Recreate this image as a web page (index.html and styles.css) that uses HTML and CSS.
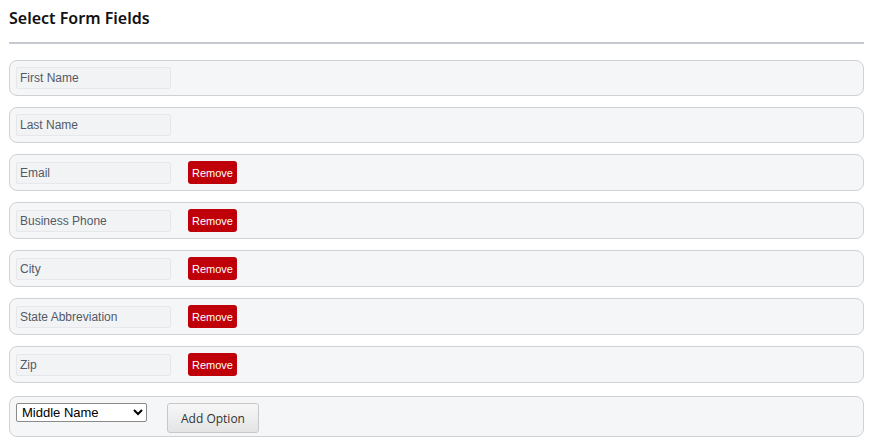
FILE: index.html
```html
<!DOCTYPE html>
<html>
<head>
<meta charset="utf-8">
<link rel="stylesheet" href="styles.css">
</head>
<body>
<div class="page">
  <h2 class="title">Select Form Fields</h2>
  <hr class="rule">
  <div class="fields">
    <div class="field-row"><div class="field-name">First Name</div></div>
    <div class="field-row"><div class="field-name">Last Name</div></div>
    <div class="field-row"><div class="field-name">Email</div><button class="btn-remove">Remove</button></div>
    <div class="field-row"><div class="field-name">Business Phone</div><button class="btn-remove">Remove</button></div>
    <div class="field-row"><div class="field-name">City</div><button class="btn-remove">Remove</button></div>
    <div class="field-row"><div class="field-name">State Abbreviation</div><button class="btn-remove">Remove</button></div>
    <div class="field-row"><div class="field-name">Zip</div><button class="btn-remove">Remove</button></div>
    <div class="field-row add-row">
      <select class="option-select">
        <option>Middle Name</option>
        <option>Company</option>
        <option>Job Title</option>
        <option>Address</option>
      </select>
      <button class="btn-add">Add Option</button>
    </div>
  </div>
</div>
</body>
</html>
```

FILE: styles.css
```css
html, body {
  margin: 0;
  padding: 0;
  background: #ffffff;
}

.page {
  padding: 6px 0 0 9px;
  width: 855px;
  font-family: "Liberation Sans", Arial, sans-serif;
}

.title {
  margin: 0;
  font-family: "Noto Sans", "Open Sans", sans-serif;
  font-weight: 600;
  font-size: 16px;
  line-height: 24px;
  color: #111111;
}

.rule {
  margin: 12px 0 0 0;
  border: 0;
  height: 2px;
  background: #c6c9d1;
}

.fields {
  display: flex;
  flex-direction: column;
  gap: 11px;
  margin-top: 16px;
}

.field-row {
  display: flex;
  align-items: center;
  padding: 6px;
  background: #f5f6f8;
  border: 1px solid #cfd1d5;
  border-radius: 8px;
}

.field-name {
  box-sizing: border-box;
  width: 155px;
  height: 22px;
  padding: 0 3px;
  line-height: 20px;
  font-size: 12px;
  color: #535a66;
  background: #f2f3f5;
  border: 1px solid #e5e7ea;
  border-radius: 2px;
}

.btn-remove {
  margin-left: 17px;
  width: 49px;
  height: 23px;
  padding: 0;
  border: 0;
  border-radius: 3px;
  background: #c00008;
  color: #ffffff;
  font-family: "Liberation Sans", Arial, sans-serif;
  font-size: 11px;
}

.add-row {
  align-items: flex-start;
  margin-top: 2px;
  padding: 6px 6px 3px 6px;
}

.option-select {
  width: 131px;
  height: 19px;
  font-family: "Liberation Sans", Arial, sans-serif;
  font-size: 13px;
  color: #000000;
  background: #ffffff;
  border: 1px solid #8a8a8a;
  border-radius: 2px;
  padding: 0 0 0 1px;
}

.btn-add {
  margin-left: 20px;
  width: 92px;
  height: 30px;
  padding: 0;
  border: 1px solid #c8c8c8;
  border-radius: 3px;
  background: linear-gradient(#f7f7f7, #e4e4e4);
  color: #333333;
  font-family: "Open Sans", sans-serif;
  font-size: 12px;
}
```
